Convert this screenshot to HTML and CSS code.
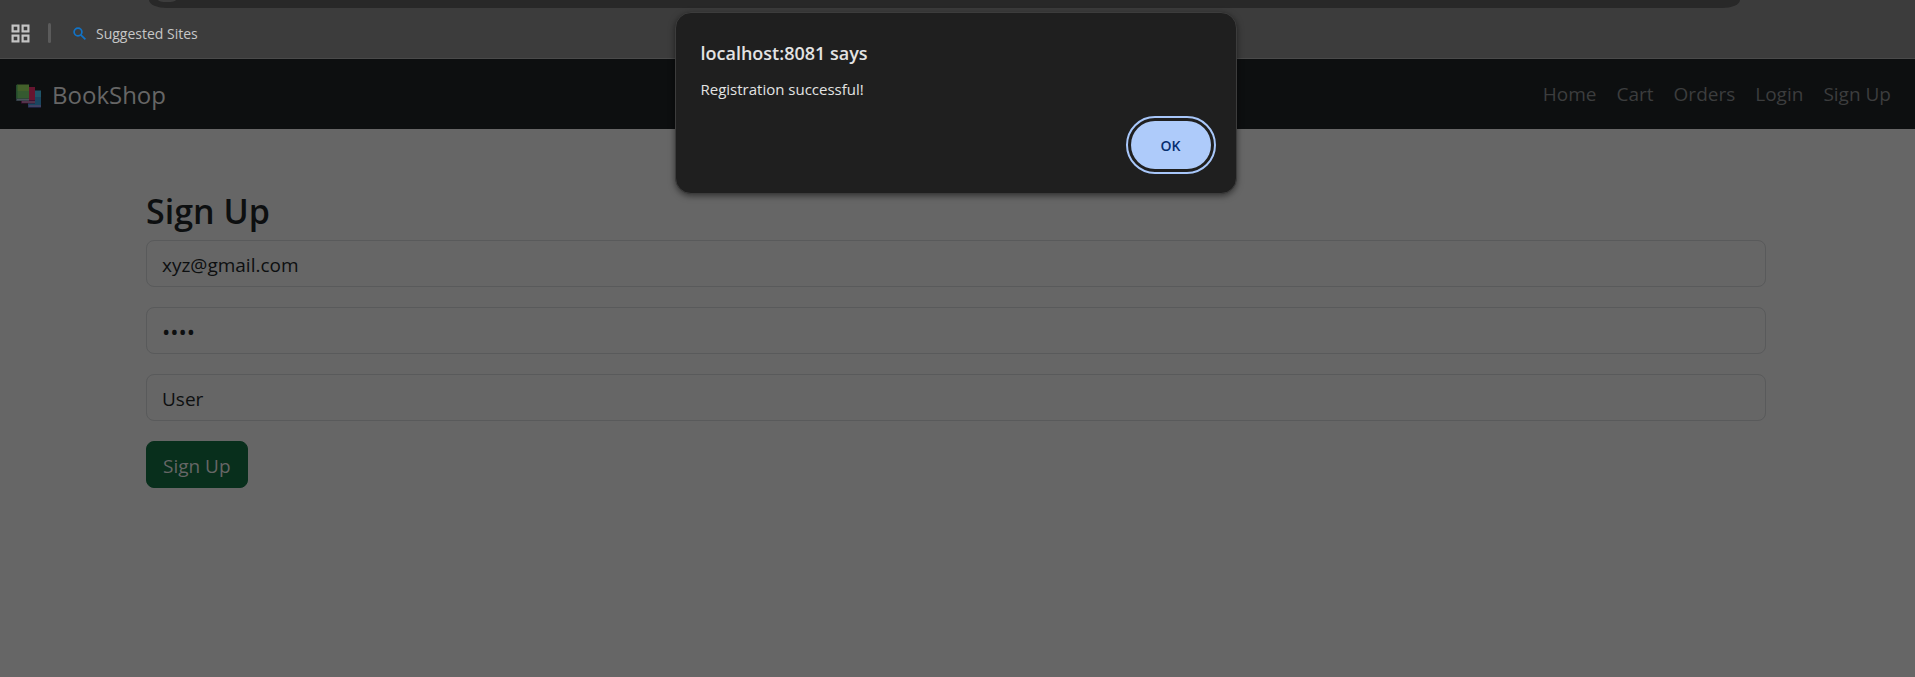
FILE: index.html
```html
<!DOCTYPE html>
<html lang="en">
<head>
<meta charset="utf-8">
<title>BookShop</title>
<link rel="stylesheet" href="styles.css">
</head>
<body>
<header class="browser">
  <div class="omnibox"><span class="site-info"></span></div>
  <div class="bookmarks">
    <button class="apps" type="button" aria-label="Apps">
      <svg width="19" height="19" viewBox="0 0 19 19" fill="none" stroke="#c4c4c4" stroke-width="2.2"><rect x="1.6" y="1.6" width="5.8" height="5.8"/><rect x="11.6" y="1.6" width="5.8" height="5.8"/><rect x="1.6" y="11.6" width="5.8" height="5.8"/><rect x="11.6" y="11.6" width="5.8" height="5.8"/></svg>
    </button>
    <span class="divider"></span>
    <a class="bookmark" href="#">
      <svg width="13" height="13" viewBox="0 0 13 13" fill="none" stroke="#1173c7" stroke-width="1.7"><circle cx="5" cy="5" r="3.9"/><path d="M7.8 7.8L12.4 12.4"/></svg>
      Suggested Sites
    </a>
  </div>
</header>
<nav class="navbar">
  <a class="brand" href="#">
    <svg width="26" height="28" viewBox="0 0 26 28">
      <path fill="#1f5468" d="M13 10.500h12V18H13z"/><path fill="#1a4660" d="M12 17h13v8H12z"/><path fill="#24264e" d="M12 25h13v2.700H12z"/><path fill="#585e78" d="M12.500 25.500h12.500v1H12.500z"/>
      <path fill="#66152f" d="M6 7h13v14H6z"/><path fill="#3e1030" d="M5 20h14v3.500H5z"/><path fill="#685666" d="M6 21.500h13v1H6z"/>
      <path fill="#43602a" d="M1 4.500h12V12H1z"/><path fill="#355a30" d="M1 11h12v8H1z"/><path fill="#234a2c" d="M0 5l1.500-.5V19H0z"/><path fill="#28343c" d="M0 18.500h13V21H0z"/><path fill="#5b6268" d="M1 19.300h12v1H1z"/>
    </svg>
    BookShop
  </a>
  <div class="links">
    <a href="#">Home</a><a href="#">Cart</a><a href="#">Orders</a><a href="#">Login</a><a href="#">Sign Up</a>
  </div>
</nav>
<main class="container">
  <h2>Sign Up</h2>
  <form class="form">
    <input class="field" type="email" aria-label="Email" value="xyz@gmail.com">
    <input class="field password" type="password" aria-label="Password" value="abcd">
    <input class="field" type="text" aria-label="Role" value="User">
    <button class="submit" type="button">Sign Up</button>
  </form>
</main>
<div class="dialog" role="alertdialog" aria-labelledby="dialog-title" aria-describedby="dialog-text">
  <h1 id="dialog-title">localhost:8081 says</h1>
  <p id="dialog-text">Registration successful!</p>
  <button class="ok" type="button">OK</button>
</div>
</body>
</html>
```
FILE: styles.css
```css
* { box-sizing: border-box; }
body {
  margin: 0;
  min-height: 100vh;
  background: #666;
  color: #0d0f10;
  font-family: "Segoe UI", "Open Sans", "Noto Sans", sans-serif;
  font-size: 19px;
}
a { color: inherit; text-decoration: none; }
button, input { font: inherit; }
.browser {
  height: 59px;
  background: #3c3c3c;
  border-bottom: 1px solid #4a4a4a;
}
.omnibox {
  height: 8px;
  margin: 0 175px 0 149px;
  overflow: hidden;
  background: #282828;
  border-radius: 0 0 18px 18px / 0 0 8px 8px;
}
.site-info {
  display: block;
  width: 18px;
  height: 2px;
  margin-left: 9px;
  background: #3c3c3c;
  border-radius: 0 0 9px 9px / 0 0 2px 2px;
}
.bookmarks {
  display: flex;
  align-items: center;
  height: 50px;
  padding: 0 11px;
}
.apps {
  display: flex;
  padding: 0;
  border: 0;
  background: none;
}
.divider {
  width: 3px;
  height: 20px;
  margin: 0 22px 0 18px;
  background: #5b5b5b;
  border-radius: 2px;
}
.bookmark {
  display: flex;
  align-items: center;
  gap: 10px;
  color: #c7c7c7;
  font-size: 14px;
}
.navbar {
  display: flex;
  align-items: center;
  justify-content: space-between;
  height: 70px;
  padding: 0 24px 0 16px;
  background: #0d0f10;
}
.brand {
  display: flex;
  align-items: center;
  gap: 10px;
  color: #666;
  font-size: 24px;
}
.links {
  display: flex;
  gap: 20px;
  color: #3c3d3e;
}
.container { padding: 61px 149px 0 146px; }
h2 {
  margin: 0 0 8px;
  font-size: 34px;
  font-weight: 600;
  line-height: 42px;
}
.form {
  display: flex;
  flex-direction: column;
  align-items: flex-start;
  gap: 20px;
}
.field, .submit {
  height: 47px;
  padding: 2px 15px 0;
  border: 1px solid #595a5b;
  border-radius: 8px;
}
.field {
  width: 100%;
  background: #666;
  color: #0d0f10;
}
.password {
  padding-top: 0;
  font-size: 22px;
}
.submit {
  padding: 2px 16px 0;
  border-color: #082f1c;
  background: #082f1c;
  color: #666;
}
.dialog {
  position: absolute;
  top: 12px;
  left: 50%;
  display: flex;
  flex-direction: column;
  width: 562px;
  margin-left: -283px;
  padding: 26px 25px 24px;
  background: #1f1f1f;
  border: 1px solid #3c3c3c;
  border-radius: 16px;
  box-shadow: 0 2px 6px rgba(0, 0, 0, 0.5);
  color: #e3e3e3;
}
.dialog h1 {
  margin: 0;
  font-size: 18px;
  font-weight: 600;
  line-height: 28px;
}
.dialog p {
  margin: 12px 0 22px;
  font-size: 15px;
  line-height: 20px;
}
.ok {
  align-self: flex-end;
  width: 80px;
  height: 48px;
  padding: 0;
  border: 0;
  border-radius: 24px;
  outline: 2px solid #a8c7fa;
  outline-offset: 3px;
  background: #aecbfa;
  color: #062e6f;
  font-size: 14px;
  font-weight: 600;
}
```
